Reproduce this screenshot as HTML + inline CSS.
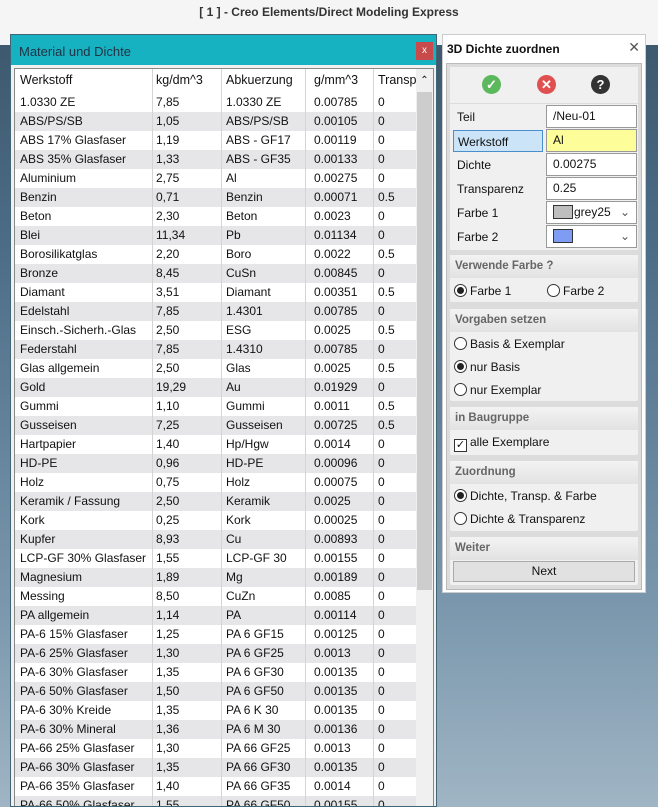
<!DOCTYPE html>
<html style="width:658px;height:807px;overflow:hidden"><head><meta charset="utf-8"><style>
*{box-sizing:border-box;margin:0;padding:0}
body{width:658px;height:807px;overflow:hidden;position:relative;font-family:"Liberation Sans",sans-serif;font-size:12px;color:#111;background:linear-gradient(180deg,#3b5569 0%,#4c6c86 30%,#7a97ad 75%,#a0b5c4 100%)}
.top{position:absolute;left:0;top:0;width:658px;height:45px;background:#f5f5f5}
.top div{position:absolute;top:5px;left:0;width:658px;text-align:center;font-weight:bold;font-size:12px;color:#333}
.win{position:absolute;left:10px;top:34px;width:427px;height:773px;background:#f0f0f0;border:1px solid #3f6677;overflow:hidden}
.tb{height:30px;background:#17b2c2;color:#234;font-size:13px;padding:9px 0 0 8px}
.xb{position:absolute;right:3px;top:7px;width:17px;height:18px;background:#c94a4a;color:#fff;font-size:10px;text-align:center;line-height:17px}
.tbl{position:absolute;left:3px;top:33px;width:420px;height:760px;background:#fff;border:1px solid #888;overflow:hidden}
.r{position:absolute;left:0;width:401px;height:19px;line-height:19px}
.r.g{background:#e6e6e8}
.r span{position:absolute;top:0;white-space:nowrap}
.h{height:23px;line-height:23px;top:0;font-size:12.5px}
.vl{position:absolute;top:0;width:1px;height:760px;background:#d4d4d4}
.sb{position:absolute;left:401px;top:0;width:17px;height:760px;background:#f0f0f0}
.th{position:absolute;left:1px;top:23px;width:15px;height:498px;background:#cdcdcd}
.rp{position:absolute;left:442px;top:34px;width:204px;height:559px;background:#fff;border:1px solid #ccc}
.rp .t{position:absolute;left:4px;top:7px;font-weight:bold;font-size:12px}
.rp .cx{position:absolute;right:5px;top:4px;font-size:14px;color:#555}
.in{position:absolute;left:3px;top:28px;width:196px;height:527px;background:#dcdcdc;border:1px solid #bbb}
.bar{position:absolute;left:3px;top:3px;width:188px;height:36px;background:#f0f0f0}
.ic{position:absolute;top:8px;width:19px;height:19px;border-radius:50%;color:#fff;font-weight:bold;text-align:center;line-height:19px;font-size:13px}
.frm{position:absolute;left:3px;top:40px;width:188px;height:146px;background:#f0f0f0}
.lb{position:absolute;left:3px;width:90px;height:22px;line-height:22px;padding-left:4px}
.fd{position:absolute;left:96px;width:91px;height:23px;line-height:21px;padding-left:6px;background:#fff;border:1px solid #999}
.sec{position:absolute;left:3px;width:188px;background:#f0f0f0;border-radius:2px}
.sh{height:23px;line-height:22px;padding-left:5px;font-weight:bold;color:#666;font-size:11.5px;background:linear-gradient(#f3f3f3,#e2e2e2)}
.op{position:absolute;height:20px;line-height:20px;white-space:nowrap}
.rad{display:inline-block;width:13px;height:13px;border:1px solid #333;border-radius:50%;vertical-align:-2px;margin-right:3px;position:relative;background:#fff}
.rad.on::after{content:"";position:absolute;left:2px;top:2px;width:7px;height:7px;border-radius:50%;background:#222}
</style></head><body>
<div class="top"><div>[ 1 ] - Creo Elements/Direct Modeling Express</div></div>
<div class="win">
<div class="tb">Material und Dichte</div><div class="xb">x</div>
<div class="tbl" id="t">
<div class="r h"><span style="left:5px">Werkstoff</span><span style="left:141px">kg/dm^3</span><span style="left:211px">Abkuerzung</span><span style="left:299px">g/mm^3</span><span style="left:363px">Transp</span></div>
</div>
</div>
<div class="rp"><div class="t">3D Dichte zuordnen</div><div class="cx">✕</div>
<div class="in">
<div class="bar">
<div class="ic" style="left:32px;background:#5cb85c">✓</div>
<div class="ic" style="left:87px;background:#e05050">✕</div>
<div class="ic" style="left:141px;background:#333">?</div>
</div>
<div class="frm">
<div class="lb" style="top:2px">Teil</div><div class="fd" style="top:1px">/Neu-01</div>
<div class="lb" style="top:26px;background:#cce4f7;border:1px solid #4a8fcc">Werkstoff</div><div class="fd" style="top:25px;background:#fdfd9a">Al</div>
<div class="lb" style="top:50px">Dichte</div><div class="fd" style="top:49px">0.00275</div>
<div class="lb" style="top:74px">Transparenz</div><div class="fd" style="top:73px">0.25</div>
<div class="lb" style="top:98px">Farbe 1</div><div class="fd" style="top:97px"><span style="display:inline-block;width:20px;height:14px;background:#bebebe;border:1px solid #333;vertical-align:-3px;margin-right:1px"></span>grey25<span style="position:absolute;right:6px;color:#555">⌄</span></div>
<div class="lb" style="top:122px">Farbe 2</div><div class="fd" style="top:121px"><span style="display:inline-block;width:20px;height:14px;background:#7f9cf5;border:1px solid #333;vertical-align:-3px"></span><span style="position:absolute;right:6px;color:#555">⌄</span></div>
</div>
<div class="sec" style="top:191px;height:47px"><div class="sh">Verwende Farbe ?</div>
<div class="op" style="left:4px;top:26px"><span class="rad on"></span>Farbe 1</div><div class="op" style="left:97px;top:26px"><span class="rad"></span>Farbe 2</div></div>
<div class="sec" style="top:245px;height:92px"><div class="sh">Vorgaben setzen</div>
<div class="op" style="left:4px;top:25px"><span class="rad"></span>Basis &amp; Exemplar</div>
<div class="op" style="left:4px;top:48px"><span class="rad on"></span>nur Basis</div>
<div class="op" style="left:4px;top:71px"><span class="rad"></span>nur Exemplar</div></div>
<div class="sec" style="top:343px;height:48px"><div class="sh">in Baugruppe</div>
<div class="op" style="left:4px;top:25px"><span style="display:inline-block;width:13px;height:13px;border:1px solid #333;vertical-align:-2px;margin-right:3px;font-size:11px;line-height:11px;text-align:center;background:#fff">✓</span>alle Exemplare</div></div>
<div class="sec" style="top:397px;height:70px"><div class="sh">Zuordnung</div>
<div class="op" style="left:4px;top:25px"><span class="rad on"></span>Dichte, Transp. &amp; Farbe</div>
<div class="op" style="left:4px;top:48px"><span class="rad"></span>Dichte &amp; Transparenz</div></div>
<div class="sec" style="top:473px;height:48px"><div class="sh">Weiter</div>
<div style="position:absolute;left:3px;top:24px;width:182px;height:21px;border:1px solid #aaa;background:#e1e1e1;text-align:center;line-height:19px">Next</div></div>
</div></div>
<script>
var d=[["1.0330 ZE","7,85","1.0330 ZE","0.00785","0"],["ABS/PS/SB","1,05","ABS/PS/SB","0.00105","0"],["ABS 17% Glasfaser","1,19","ABS - GF17","0.00119","0"],["ABS 35% Glasfaser","1,33","ABS - GF35","0.00133","0"],["Aluminium","2,75","Al","0.00275","0"],["Benzin","0,71","Benzin","0.00071","0.5"],["Beton","2,30","Beton","0.0023","0"],["Blei","11,34","Pb","0.01134","0"],["Borosilikatglas","2,20","Boro","0.0022","0.5"],["Bronze","8,45","CuSn","0.00845","0"],["Diamant","3,51","Diamant","0.00351","0.5"],["Edelstahl","7,85","1.4301","0.00785","0"],["Einsch.-Sicherh.-Glas","2,50","ESG","0.0025","0.5"],["Federstahl","7,85","1.4310","0.00785","0"],["Glas allgemein","2,50","Glas","0.0025","0.5"],["Gold","19,29","Au","0.01929","0"],["Gummi","1,10","Gummi","0.0011","0.5"],["Gusseisen","7,25","Gusseisen","0.00725","0.5"],["Hartpapier","1,40","Hp/Hgw","0.0014","0"],["HD-PE","0,96","HD-PE","0.00096","0"],["Holz","0,75","Holz","0.00075","0"],["Keramik / Fassung","2,50","Keramik","0.0025","0"],["Kork","0,25","Kork","0.00025","0"],["Kupfer","8,93","Cu","0.00893","0"],["LCP-GF 30% Glasfaser","1,55","LCP-GF 30","0.00155","0"],["Magnesium","1,89","Mg","0.00189","0"],["Messing","8,50","CuZn","0.0085","0"],["PA allgemein","1,14","PA","0.00114","0"],["PA-6 15% Glasfaser","1,25","PA 6 GF15","0.00125","0"],["PA-6 25% Glasfaser","1,30","PA 6 GF25","0.0013","0"],["PA-6 30% Glasfaser","1,35","PA 6 GF30","0.00135","0"],["PA-6 50% Glasfaser","1,50","PA 6 GF50","0.00135","0"],["PA-6 30% Kreide","1,35","PA 6 K 30","0.00135","0"],["PA-6 30% Mineral","1,36","PA 6 M 30","0.00136","0"],["PA-66 25% Glasfaser","1,30","PA 66 GF25","0.0013","0"],["PA-66 30% Glasfaser","1,35","PA 66 GF30","0.00135","0"],["PA-66 35% Glasfaser","1,40","PA 66 GF35","0.0014","0"],["PA-66 50% Glasfaser","1,55","PA 66 GF50","0.00155","0"]];
var x=[5,141,211,299,363],h="";
d.forEach(function(r,i){h+='<div class="r'+(i%2?' g':'')+'" style="top:'+(24+i*19)+'px">';r.forEach(function(c,j){h+='<span style="left:'+x[j]+'px">'+c+'</span>'});h+='</div>'});
[137,206,290,358].forEach(function(v){h+='<div class="vl" style="left:'+v+'px"></div>'});
h+='<div class="sb"><div style="text-align:center;font-size:10px;height:23px;line-height:23px">&#8963;</div><div class="th"></div></div>';
document.getElementById('t').insertAdjacentHTML('beforeend',h);
</script>
</body></html>
